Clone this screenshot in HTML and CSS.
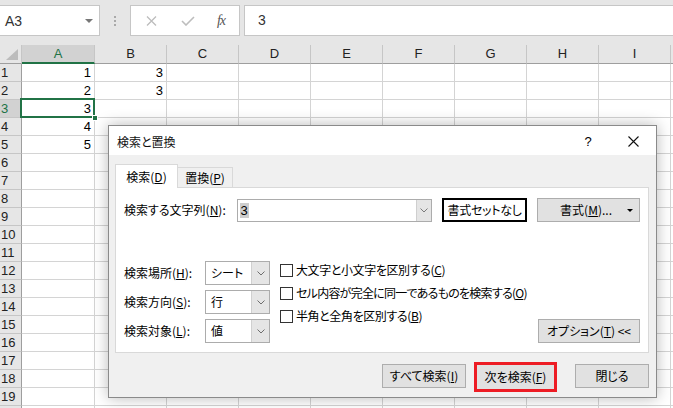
FILE: index.html
```html
<!DOCTYPE html>
<html lang="ja">
<head>
<meta charset="utf-8">
<title>検索と置換</title>
<link rel="stylesheet" href="styles.css">
</head>
<body>
<div class="fbar">
  <div class="namebox"><span>A3</span><span class="nb-arrow"></span></div>
  <div class="grip"><i></i><i></i><i></i></div>
  <div class="fxbox">
    <span class="fx-slot s1"><svg width="11" height="10" viewBox="0 0 11 10"><path d="M1 0.5 L10 9.5 M10 0.5 L1 9.5" stroke="#bdbdbd" stroke-width="1.3" fill="none"/></svg></span>
    <span class="fx-slot s2"><svg width="14" height="10" viewBox="0 0 14 10"><path d="M1 5 L5 9 L13 1" stroke="#bdbdbd" stroke-width="1.6" fill="none"/></svg></span>
    <span class="fx-slot s3"><span class="fx">fx</span></span>
  </div>
  <div class="finput">3</div>
</div>

<div class="sheet">
  <div class="row hdr">
    <div class="corner"><svg width="13" height="11" viewBox="0 0 13 11"><polygon points="12,0 12,11 0,11" fill="#bcbcbc"/></svg></div>
    <div class="ch cur">A</div><div class="ch">B</div><div class="ch">C</div><div class="ch">D</div><div class="ch">E</div><div class="ch">F</div><div class="ch">G</div><div class="ch">H</div><div class="ch">I</div><div class="ch rest"></div>
  </div>
  <div class="row"><div class="rh">1</div><div class="c num">1</div><div class="c num">3</div><div class="c"></div><div class="c"></div><div class="c"></div><div class="c"></div><div class="c"></div><div class="c"></div><div class="c"></div><div class="c rest"></div></div>
  <div class="row"><div class="rh">2</div><div class="c num">2</div><div class="c num">3</div><div class="c"></div><div class="c"></div><div class="c"></div><div class="c"></div><div class="c"></div><div class="c"></div><div class="c"></div><div class="c rest"></div></div>
  <div class="row"><div class="rh cur">3</div><div class="c num active">3<span class="handle"></span></div><div class="c"></div><div class="c"></div><div class="c"></div><div class="c"></div><div class="c"></div><div class="c"></div><div class="c"></div><div class="c"></div><div class="c rest"></div></div>
  <div class="row"><div class="rh">4</div><div class="c num">4</div><div class="c"></div><div class="c"></div><div class="c"></div><div class="c"></div><div class="c"></div><div class="c"></div><div class="c"></div><div class="c"></div><div class="c rest"></div></div>
  <div class="row"><div class="rh">5</div><div class="c num">5</div><div class="c"></div><div class="c"></div><div class="c"></div><div class="c"></div><div class="c"></div><div class="c"></div><div class="c"></div><div class="c"></div><div class="c rest"></div></div>
  <div class="row"><div class="rh">6</div><div class="c"></div><div class="c"></div><div class="c"></div><div class="c"></div><div class="c"></div><div class="c"></div><div class="c"></div><div class="c"></div><div class="c"></div><div class="c rest"></div></div>
  <div class="row"><div class="rh">7</div><div class="c"></div><div class="c"></div><div class="c"></div><div class="c"></div><div class="c"></div><div class="c"></div><div class="c"></div><div class="c"></div><div class="c"></div><div class="c rest"></div></div>
  <div class="row"><div class="rh">8</div><div class="c"></div><div class="c"></div><div class="c"></div><div class="c"></div><div class="c"></div><div class="c"></div><div class="c"></div><div class="c"></div><div class="c"></div><div class="c rest"></div></div>
  <div class="row"><div class="rh">9</div><div class="c"></div><div class="c"></div><div class="c"></div><div class="c"></div><div class="c"></div><div class="c"></div><div class="c"></div><div class="c"></div><div class="c"></div><div class="c rest"></div></div>
  <div class="row"><div class="rh">10</div><div class="c"></div><div class="c"></div><div class="c"></div><div class="c"></div><div class="c"></div><div class="c"></div><div class="c"></div><div class="c"></div><div class="c"></div><div class="c rest"></div></div>
  <div class="row"><div class="rh">11</div><div class="c"></div><div class="c"></div><div class="c"></div><div class="c"></div><div class="c"></div><div class="c"></div><div class="c"></div><div class="c"></div><div class="c"></div><div class="c rest"></div></div>
  <div class="row"><div class="rh">12</div><div class="c"></div><div class="c"></div><div class="c"></div><div class="c"></div><div class="c"></div><div class="c"></div><div class="c"></div><div class="c"></div><div class="c"></div><div class="c rest"></div></div>
  <div class="row"><div class="rh">13</div><div class="c"></div><div class="c"></div><div class="c"></div><div class="c"></div><div class="c"></div><div class="c"></div><div class="c"></div><div class="c"></div><div class="c"></div><div class="c rest"></div></div>
  <div class="row"><div class="rh">14</div><div class="c"></div><div class="c"></div><div class="c"></div><div class="c"></div><div class="c"></div><div class="c"></div><div class="c"></div><div class="c"></div><div class="c"></div><div class="c rest"></div></div>
  <div class="row"><div class="rh">15</div><div class="c"></div><div class="c"></div><div class="c"></div><div class="c"></div><div class="c"></div><div class="c"></div><div class="c"></div><div class="c"></div><div class="c"></div><div class="c rest"></div></div>
  <div class="row"><div class="rh">16</div><div class="c"></div><div class="c"></div><div class="c"></div><div class="c"></div><div class="c"></div><div class="c"></div><div class="c"></div><div class="c"></div><div class="c"></div><div class="c rest"></div></div>
  <div class="row"><div class="rh">17</div><div class="c"></div><div class="c"></div><div class="c"></div><div class="c"></div><div class="c"></div><div class="c"></div><div class="c"></div><div class="c"></div><div class="c"></div><div class="c rest"></div></div>
  <div class="row"><div class="rh">18</div><div class="c"></div><div class="c"></div><div class="c"></div><div class="c"></div><div class="c"></div><div class="c"></div><div class="c"></div><div class="c"></div><div class="c"></div><div class="c rest"></div></div>
  <div class="row"><div class="rh">19</div><div class="c"></div><div class="c"></div><div class="c"></div><div class="c"></div><div class="c"></div><div class="c"></div><div class="c"></div><div class="c"></div><div class="c"></div><div class="c rest"></div></div>
  <div class="row"><div class="rh"></div><div class="c"></div><div class="c"></div><div class="c"></div><div class="c"></div><div class="c"></div><div class="c"></div><div class="c"></div><div class="c"></div><div class="c"></div><div class="c rest"></div></div>
</div>

<div class="dialog">
  <div class="titlebar">
    <span class="title">検索と置換</span>
    <span class="help">?</span>
    <span class="close"><svg width="11" height="11" viewBox="0 0 11 11"><path d="M0.5 0.5 L10.5 10.5 M10.5 0.5 L0.5 10.5" stroke="#111" stroke-width="1.1" fill="none"/></svg></span>
  </div>
  <div class="dbody">
    <div class="tabs">
      <div class="tab active">検索(<u>D</u>)</div>
      <div class="tab">置換(<u>P</u>)</div>
    </div>
    <div class="panel">
      <div class="toprow">
        <label class="lbl-find">検索する文字列(<u>N</u>):</label>
        <div class="combo">
          <span class="combo-text"><span class="hl">3</span></span>
          <span class="combo-btn"><svg width="8" height="5" viewBox="0 0 8 5"><path d="M0.5 0.5 L4 4 L7.5 0.5" stroke="#7a7a7a" stroke-width="1" fill="none"/></svg></span>
        </div>
        <div class="preview">書式セットなし</div>
        <div class="btn fmt"><span>書式(<u>M</u>)...</span><span class="caret"></span></div>
      </div>
      <div class="lower">
        <div class="opts">
          <label>検索場所(<u>H</u>):</label>
          <div class="dd"><span class="dd-text">シート</span><span class="dd-btn"><svg width="8" height="5" viewBox="0 0 8 5"><path d="M0.5 0.5 L4 4 L7.5 0.5" stroke="#6e6e6e" stroke-width="1" fill="none"/></svg></span></div>
          <label>検索方向(<u>S</u>):</label>
          <div class="dd"><span class="dd-text">行</span><span class="dd-btn"><svg width="8" height="5" viewBox="0 0 8 5"><path d="M0.5 0.5 L4 4 L7.5 0.5" stroke="#6e6e6e" stroke-width="1" fill="none"/></svg></span></div>
          <label>検索対象(<u>L</u>):</label>
          <div class="dd"><span class="dd-text">値</span><span class="dd-btn"><svg width="8" height="5" viewBox="0 0 8 5"><path d="M0.5 0.5 L4 4 L7.5 0.5" stroke="#6e6e6e" stroke-width="1" fill="none"/></svg></span></div>
        </div>
        <div class="checks">
          <div class="chk"><span class="box"></span>大文字と小文字を区別する(<u>C</u>)</div>
          <div class="chk tight"><span class="box"></span>セル内容が完全に同一であるものを検索する(<u>O</u>)</div>
          <div class="chk"><span class="box"></span>半角と全角を区別する(<u>B</u>)</div>
        </div>
        <div class="btn optbtn">オプション(<u>T</u>) &lt;&lt;</div>
      </div>
    </div>
    <div class="actions">
      <div class="btn b-all">すべて検索(<u>I</u>)</div>
      <div class="mark"><div class="btn b-next">次を検索(<u>F</u>)</div></div>
      <div class="btn b-close">閉じる</div>
    </div>
  </div>
</div>
</body>
</html>
```

FILE: styles.css
```css
* { box-sizing: border-box; }
html, body { margin: 0; padding: 0; }
body {
  width: 673px;
  height: 408px;
  overflow: hidden;
  background: #fff;
  font-family: "Liberation Sans", Arial, sans-serif;
  color: #222;
  position: relative;
}

/* formula bar */
.fbar {
  height: 45px;
  background: #e6e6e6;
  display: flex;
  align-items: flex-start;
  padding-top: 5px;
}
.namebox {
  width: 100px;
  height: 31px;
  background: #fff;
  border: 1px solid #c6c6c6;
  border-left: none;
  display: flex;
  align-items: center;
  justify-content: space-between;
  padding: 0 6px 0 5px;
  font-size: 14px;
  color: #333;
}
.nb-arrow {
  width: 0; height: 0;
  border-left: 4px solid transparent;
  border-right: 4px solid transparent;
  border-top: 4px solid #777;
}
.grip {
  width: 30px;
  height: 31px;
  display: flex;
  flex-direction: column;
  align-items: center;
  justify-content: center;
  gap: 2px;
}
.grip i { display: block; width: 2px; height: 2px; background: #a9a9a9; }
.fxbox {
  width: 110px;
  height: 31px;
  background: #fff;
  border: 1px solid #c6c6c6;
  display: flex;
  align-items: center;
}
.fx-slot { display: flex; justify-content: center; align-items: center; }
.fx-slot.s1 { width: 40px; }
.fx-slot.s2 { width: 34px; }
.fx-slot.s3 { width: 32px; }
.fx {
  font-family: "Liberation Serif", "DejaVu Serif", serif;
  font-style: italic;
  font-size: 14px;
  color: #555;
  letter-spacing: -1px;
}
.finput {
  flex: 1;
  margin-left: 4px;
  height: 31px;
  background: #fff;
  border: 1px solid #c6c6c6;
  border-right: none;
  padding-left: 13px;
  font-size: 14px;
  line-height: 29px;
  color: #333;
}

/* sheet */
.row {
  display: grid;
  grid-template-columns: 22px 73px repeat(8, 72px) 1fr;
  height: 18px;
}
.row.hdr { height: 19px; background: #e6e6e6; }
.corner {
  border-right: 1px solid #c6c6c6;
  border-bottom: 1px solid #9e9e9e;
  display: flex;
  align-items: flex-end;
  justify-content: flex-end;
  padding: 0 2px 3px 0;
}
.ch {
  border-right: 1px solid #c6c6c6;
  border-bottom: 1px solid #9e9e9e;
  font-size: 13px;
  line-height: 18px;
  text-align: center;
  color: #222;
}
.ch.cur {
  background: #d2d2d2;
  color: #217346;
  border-bottom: 2px solid #217346;
  line-height: 17px;
}
.ch.rest { border-right: none; }
.rh {
  background: #e6e6e6;
  border-right: 1px solid #9e9e9e;
  border-bottom: 1px solid #c6c6c6;
  font-size: 13px;
  line-height: 17px;
  padding-left: 1px;
  color: #222;
}
.rh.cur { background: #d2d2d2; color: #217346; }
.c {
  border-right: 1px solid #d4d4d4;
  border-bottom: 1px solid #d4d4d4;
  font-size: 13px;
  line-height: 17px;
  color: #000;
}
.c.rest { border-right: none; }
.c.num { text-align: right; padding-right: 3px; }
.c.active { position: relative; }
.c.active::after {
  content: "";
  position: absolute;
  top: -2px; left: -2px; right: -1px; bottom: -1px;
  border: 2px solid #217346;
}
.handle {
  position: absolute;
  right: -4px;
  bottom: -4px;
  width: 6px;
  height: 6px;
  background: #217346;
  border: 1px solid #fff;
  z-index: 2;
}

/* dialog */
.dialog {
  position: absolute;
  left: 108px;
  top: 125px;
  width: 549px;
  height: 273px;
  background: #f0f0f0;
  border: 1px solid #8a8a8a;
  box-shadow: 0 0 14px rgba(0, 0, 0, 0.28);
  font-family: "Noto Sans CJK JP", "Noto Sans", sans-serif;
  font-feature-settings: "palt";
  font-size: 12px;
  color: #000;
  display: flex;
  flex-direction: column;
}
.dialog u { text-decoration-thickness: 1px; text-underline-offset: 1px; }
.titlebar {
  height: 29px;
  background: #fff;
  display: flex;
  align-items: center;
  padding-left: 8px;
  flex-shrink: 0;
}
.title { flex: 1; font-size: 12px; line-height: 16px; color: #111; padding-top: 2px; }
.help {
  font-family: "Liberation Sans", Arial, sans-serif;
  font-size: 13px;
  width: 12px;
  text-align: center;
  margin-right: 34px;
  padding-top: 2px;
}
.close { width: 11px; height: 11px; margin-right: 17px; display: flex; margin-top: 2px; }

.dbody {
  flex: 1;
  padding: 9px 7px 0 6px;
  display: flex;
  flex-direction: column;
}
.tabs { display: flex; align-items: flex-end; height: 24px; }
.tab {
  height: 21px;
  width: 55px;
  border: 1px solid #d9d9d9;
  border-left: none;
  border-bottom: none;
  background: #f0f0f0;
  display: flex;
  align-items: center;
  justify-content: center;
  line-height: 16px;
}
.tab.active {
  position: relative;
  z-index: 1;
  height: 24px;
  width: 63px;
  border-left: 1px solid #d9d9d9;
  background: #fff;
  padding-top: 1px;
}
.panel {
  margin-top: -1px;
  height: 166px;
  background: #fff;
  border: 1px solid #d9d9d9;
  padding: 10px 8px 9px 8px;
  display: flex;
  flex-direction: column;
  justify-content: space-between;
}
.toprow { display: flex; align-items: center; height: 24px; }
.lbl-find { width: 113px; line-height: 16px; }
.combo {
  width: 196px;
  height: 23px;
  border: 1px solid #acacac;
  display: flex;
  background: #fff;
}
.combo-text { flex: 1; display: flex; align-items: center; padding-left: 2px; }
.hl {
  background: #cdcdcd;
  font-family: "Liberation Sans", Arial, sans-serif;
  font-size: 13px;
  line-height: 15px;
  padding: 0 1px;
}
.combo-btn {
  width: 15px;
  background: #e5e5e5;
  border-left: 1px solid #cfcfcf;
  display: flex;
  align-items: center;
  justify-content: center;
}
.preview {
  margin-left: 10px;
  width: 86px;
  height: 24px;
  border: 2px solid #000;
  display: flex;
  align-items: center;
  justify-content: center;
  line-height: 16px;
  letter-spacing: -0.3px;
}
.btn {
  background: #e1e1e1;
  border: 1px solid #adadad;
  display: flex;
  align-items: center;
  justify-content: center;
  line-height: 16px;
  white-space: nowrap;
}
.btn.fmt {
  margin-left: 10px;
  width: 103px;
  height: 24px;
  justify-content: flex-end;
  padding-right: 6px;
}
.btn.fmt .caret {
  margin-left: 15px;
  width: 0; height: 0;
  border-left: 3px solid transparent;
  border-right: 3px solid transparent;
  border-top: 3px solid #000;
}

.lower { display: flex; align-items: flex-start; }
.opts {
  display: grid;
  grid-template-columns: 81px 65px;
  row-gap: 5px;
  align-items: center;
  flex-shrink: 0;
}
.opts label { line-height: 16px; white-space: nowrap; }
.dd {
  height: 24px;
  border: 1px solid #acacac;
  display: flex;
  background: #fff;
}
.dd-text { flex: 1; padding-left: 5px; display: flex; align-items: center; line-height: 16px; }
.dd-btn {
  width: 18px;
  background: #e5e5e5;
  border-left: 1px solid #d0d0d0;
  display: flex;
  align-items: center;
  justify-content: center;
}
.checks {
  margin-left: 10px;
  display: flex;
  flex-direction: column;
  gap: 5px;
  flex-shrink: 0;
}
.chk {
  height: 18px;
  display: flex;
  align-items: center;
  line-height: 16px;
  white-space: nowrap;
  letter-spacing: -0.4px;
}
.chk.tight { letter-spacing: -0.75px; }
.chk .box {
  width: 13px;
  height: 13px;
  border: 1px solid #333;
  background: #fff;
  margin-right: 3px;
  flex-shrink: 0;
}
.btn.optbtn {
  align-self: flex-end;
  margin-left: auto;
  width: 102px;
  height: 24px;
  flex-shrink: 0;
}

.actions {
  display: flex;
  justify-content: flex-end;
  align-items: flex-start;
  margin-top: 11px;
}
.b-all { width: 84px; height: 24px; }
.mark {
  margin-left: 8px;
  margin-top: -2px;
  border: 3px solid #ed1c24;
  width: 83px;
  height: 30px;
  display: flex;
}
.b-next { flex: 1; border: none; height: 24px; }
.b-close { margin-left: 18px; width: 74px; height: 24px; }
```
